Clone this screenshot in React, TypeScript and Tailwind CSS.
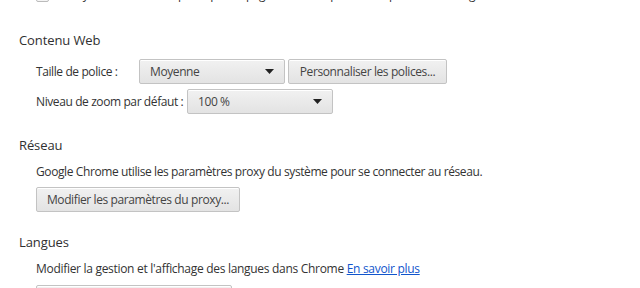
import React from "react";

const font = { fontFamily: '"Open Sans", "Noto Sans", sans-serif' };

function Caret() {
  return (
    <svg width="9" height="5" viewBox="0 0 9 5" className="shrink-0">
      <path d="M0 0h9L4.5 5z" fill="#222" />
    </svg>
  );
}

function Select({ value, width }: { value: string; width: string }) {
  return (
    <div
      className={`${width} flex h-[25px] items-center justify-between rounded-[2px] border border-[#c3c3c3] bg-gradient-to-b from-[#f1f1f1] to-[#e3e3e3] pl-[10px] pr-[10px] text-[#444] shadow-[inset_0_1px_0_#fff]`}
    >
      <span>{value}</span>
      <Caret />
    </div>
  );
}

function Button({ label, width }: { label: string; width: string }) {
  return (
    <div
      className={`${width} flex h-[25px] items-center justify-center whitespace-nowrap rounded-[2px] border border-[#c3c3c3] bg-gradient-to-b from-[#f1f1f1] to-[#e3e3e3] text-[#444] shadow-[inset_0_1px_0_#fff]`}
    >
      {label}
    </div>
  );
}

export default function App() {
  return (
    <div
      className="h-[288px] w-[640px] overflow-hidden bg-white pl-[19px] text-[12px] leading-[16px] tracking-[-0.4px] text-[#333]"
      style={font}
    >
      <div className="-mt-[13px] flex h-[16px] items-center gap-[8px] whitespace-nowrap pl-[17px]">
        <div className="h-[13px] w-[13px] shrink-0 rounded-[2px] border border-[#bbb] bg-[#f4f4f4]" />
        <span>Envoyer une demande pour que les pages ne soient pas suivies pendant la navigation</span>
      </div>

      <h3 className="mt-[28px] text-[13px] leading-[18px] tracking-[-0.1px] text-[#303030]">Contenu Web</h3>
      <div className="pl-[17px]">
        <div className="mt-[10px] flex items-center whitespace-nowrap">
          <span className="w-[103px] shrink-0">Taille de police :</span>
          <Select value="Moyenne" width="w-[146px]" />
          <div className="ml-[3px]">
            <Button label="Personnaliser les polices..." width="w-[159px]" />
          </div>
        </div>
        <div className="mt-[5px] flex items-center whitespace-nowrap">
          <span className="w-[151px] shrink-0">Niveau de zoom par défaut :</span>
          <Select value="100 %" width="w-[146px]" />
        </div>
      </div>

      <h3 className="mt-[22px] text-[13px] leading-[18px] tracking-[-0.1px] text-[#303030]">Réseau</h3>
      <div className="pl-[17px]">
        <p className="mt-[10px] whitespace-nowrap">
          Google Chrome utilise les paramètres proxy du système pour se connecter au réseau.
        </p>
        <div className="mt-[7px]">
          <Button label="Modifier les paramètres du proxy..." width="w-[204px]" />
        </div>
      </div>

      <h3 className="mt-[21px] text-[13px] leading-[18px] tracking-[-0.1px] text-[#303030]">Langues</h3>
      <div className="pl-[17px]">
        <p className="mt-[10px] whitespace-nowrap tracking-[-0.3px]">
          Modifier la gestion et l'affichage des langues dans Chrome{" "}
          <a className="text-[#1155cc] underline">En savoir plus</a>
        </p>
        <div className="mt-[8px]">
          <Button label="Paramètres de langue et de saisie..." width="w-[196px]" />
        </div>
      </div>
    </div>
  );
}
